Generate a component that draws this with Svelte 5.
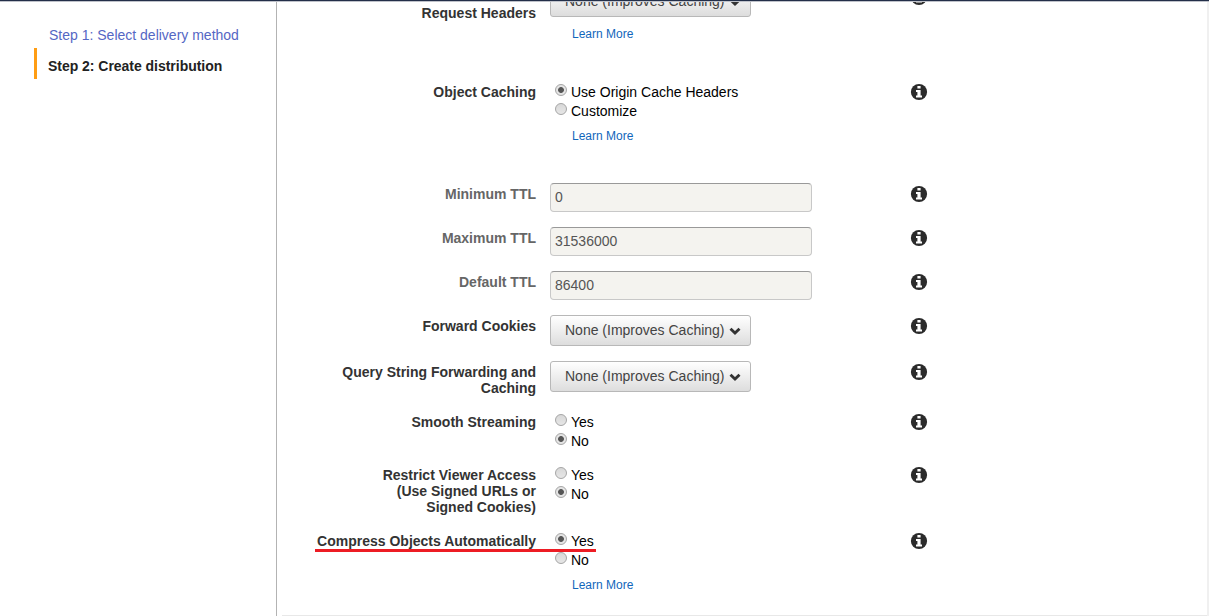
<script>
  const rows = [
    { label: ['Request Headers'], kind: 'select', value: 'None (Improves Caching)', learn: true, height: 95, clipped: true },
    { label: ['Object Caching'], kind: 'radio', options: ['Use Origin Cache Headers', 'Customize'], selected: 0, learn: true, height: 102 },
    { label: ['Minimum TTL'], kind: 'input', value: '0', height: 44 },
    { label: ['Maximum TTL'], kind: 'input', value: '31536000', height: 44 },
    { label: ['Default TTL'], kind: 'input', value: '86400', height: 44 },
    { label: ['Forward Cookies'], kind: 'select', value: 'None (Improves Caching)', height: 46 },
    { label: ['Query String Forwarding and', 'Caching'], kind: 'select', value: 'None (Improves Caching)', height: 50 },
    { label: ['Smooth Streaming'], kind: 'radio', options: ['Yes', 'No'], selected: 1, height: 53 },
    { label: ['Restrict Viewer Access', '(Use Signed URLs or', 'Signed Cookies)'], kind: 'radio', options: ['Yes', 'No'], selected: 1, height: 66 },
    { label: ['Compress Objects Automatically'], kind: 'radio', options: ['Yes', 'No'], selected: 0, learn: true, marked: true, height: 85 }
  ];
</script>

<div class="page">
  <div class="topbar"></div>
  <div class="body">
    <nav>
      <div class="step link">Step 1: Select delivery method</div>
      <div class="step current">Step 2: Create distribution</div>
    </nav>
    <main>
      <div class="form">
        {#each rows as row}
          <div class="row" class:clipped={row.clipped} style="height: {row.height}px">
            <div class="label" class:muted={row.kind === 'input'}>
              {#each row.label as line}<div><span>{line}</span></div>{/each}
            </div>
            <div class="control">
              {#if row.kind === 'select'}
                <div class="select">
                  <span>{row.value}</span>
                  <svg width="12" height="8" viewBox="0 0 12 8"><path d="M1.5 1.8 6 6l4.5-4.2" fill="none" stroke="#333" stroke-width="2.9" /></svg>
                </div>
              {:else if row.kind === 'input'}
                <div class="input">{row.value}</div>
              {:else}
                <div class="radios">
                  {#each row.options as option, i}
                    <div class="option"><i class="dot" class:on={row.selected === i}></i><span>{option}</span></div>
                  {/each}
                </div>
              {/if}
              {#if row.learn}<div class="learn">Learn More</div>{/if}
            </div>
            <svg class="info" width="16" height="16" viewBox="0 0 16 16">
              <circle cx="8" cy="8" r="8.1" fill="#2b2b2b" />
              <path d="M6.4 2h3.2v2.6H6.4zM5 6h4.6v5.6H11v2H5v-2h1.4V8H5z" fill="#fff" />
            </svg>
            {#if row.marked}<div class="mark"></div>{/if}
          </div>
        {/each}
      </div>
    </main>
    <div class="gutter"></div>
  </div>
</div>

<style>
  :global(body) { margin: 0; background: #fff; overflow: hidden; }
  .page {
    height: 616px;
    display: flex;
    flex-direction: column;
    overflow: hidden;
    font: 14px/16px "Liberation Sans", Arial, sans-serif;
    background: #fff;
  }
  .topbar { height: 1px; flex: none; background: #232f49; border-bottom: 1px solid #bfc2ca; }
  .body { flex: 1; min-height: 0; display: flex; }
  nav { width: 276px; flex: none; padding-top: 17px; box-sizing: border-box; }
  .step { margin-left: 34px; line-height: 31px; height: 31px; white-space: nowrap; box-sizing: border-box; }
  .link { color: #5567c4; padding-left: 15px; height: 29px; line-height: 32px; }
  .current { color: #222; font-weight: bold; border-left: 3px solid #ff9d14; padding-left: 11px; line-height: 36px; letter-spacing: -0.03px; }
  main { flex: 1; min-width: 0; border-left: 1px solid #b3b3b3; overflow: hidden; }
  .form { margin-top: -16px; height: 629px; margin-left: 5px; border-bottom: 1px solid #e8e8e8; }
  .row {
    display: grid;
    grid-template-columns: 254px 347px 16px;
    column-gap: 14px;
    align-items: start;
    position: relative;
    white-space: nowrap;
  }
  .label { margin-top: 3px; color: #333; font-weight: bold; text-align: right; }
  .clipped .label { margin-top: 19px; }
  .muted { color: #666; }
  .info { display: block; margin-top: 3px; overflow: visible; }
  .select {
    width: 201px;
    height: 31px;
    box-sizing: border-box;
    display: flex;
    align-items: flex-start;
    gap: 4px;
    padding: 6px 0 0 14px;
    border: 1px solid #b8b8b8;
    border-radius: 3px;
    background: linear-gradient(#fff, #ddd);
    color: #444;
  }
  .select span { width: 160px; }
  .select svg { margin-top: 5px; }
  .input {
    width: 262px;
    height: 29px;
    box-sizing: border-box;
    padding-left: 4px;
    line-height: 27px;
    color: #555;
    background: #f4f3ef;
    border: 1px solid #c8c8c8;
    border-top-color: #999;
    border-radius: 4px;
  }
  .radios { padding-top: 2px; }
  .option { display: flex; height: 19px; line-height: 19px; padding-left: 5px; gap: 4px; color: #000; }
  .dot {
    width: 12px;
    height: 12px;
    box-sizing: border-box;
    margin-top: 1px;
    border: 1px solid #a5a5a5;
    border-radius: 50%;
    background: linear-gradient(#d8d8d8, #e6e6e6);
  }
  .dot.on { background: radial-gradient(circle, #555 0 2.5px, #e4e4e4 3.3px); }
  .learn { margin-left: 22px; font-size: 12px; color: #1166bb; }
  .radios + .learn { margin-top: 7px; }
  .select + .learn { margin-top: 9px; }
  .mark { position: absolute; left: 33px; top: 19px; width: 281px; height: 3px; background: #ed1c24; }
  .gutter { width: 2px; flex: none; background: #f0f0f0; }
</style>
